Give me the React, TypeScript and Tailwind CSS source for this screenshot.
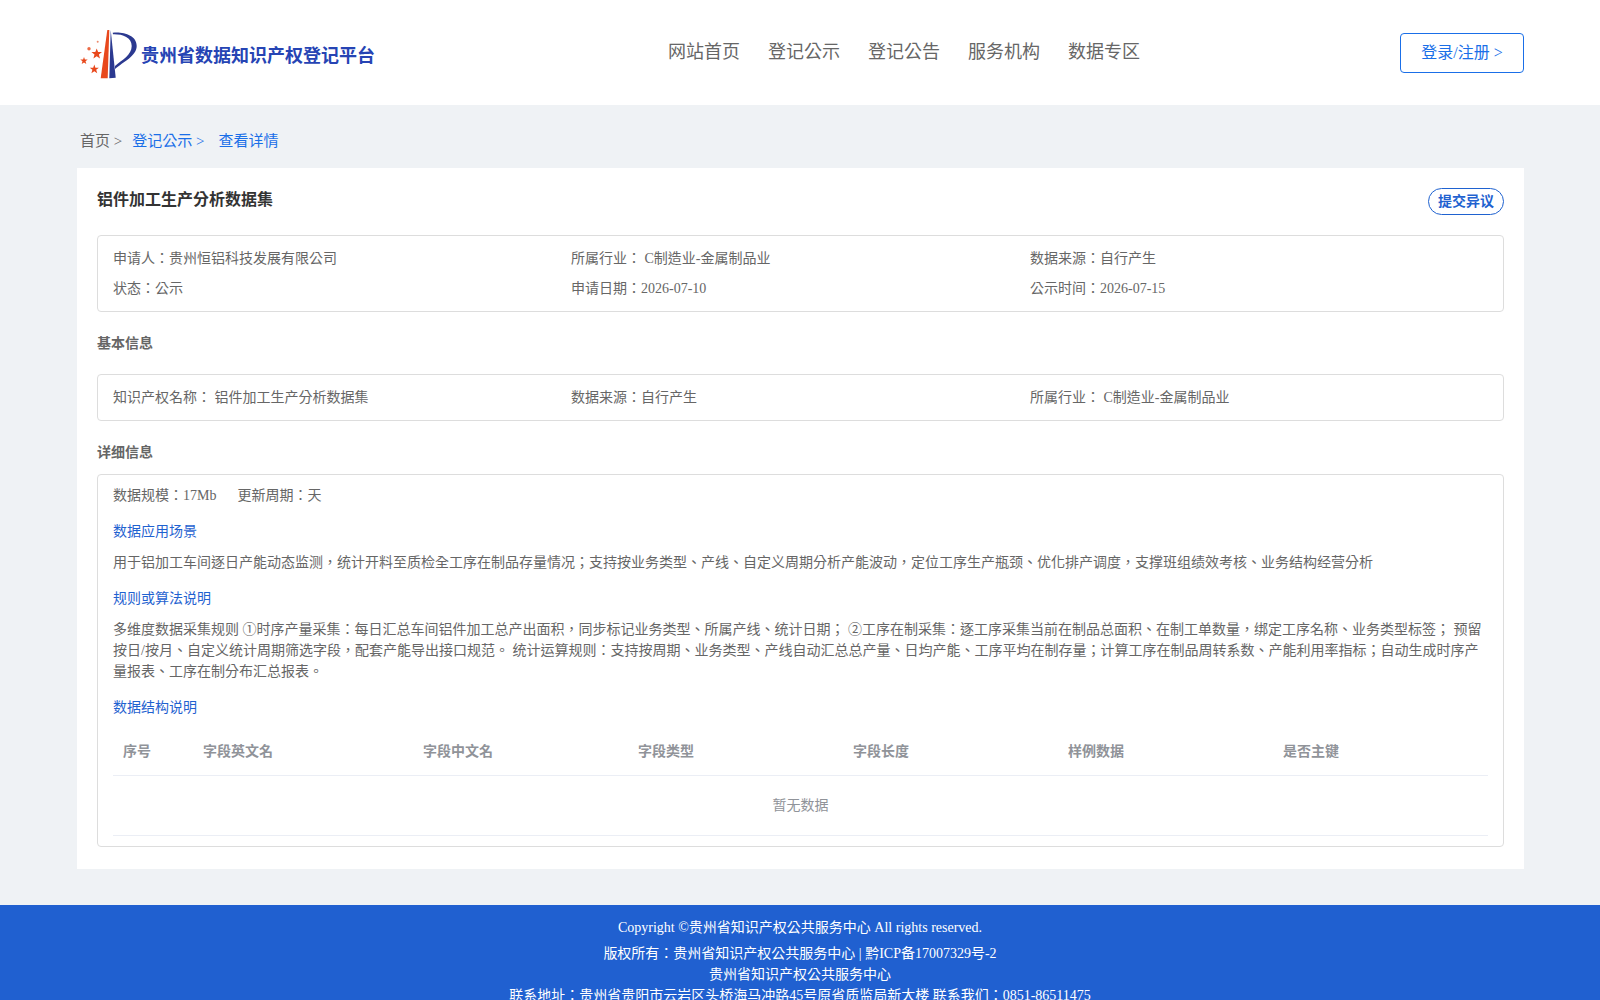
const font = 'font-["Liberation_Serif","Noto_Sans_CJK_TC",serif]';

function Logo() {
  return (
    <svg width="57" height="50" viewBox="0 0 57 50" className="shrink-0">
      <path d="M20.7 49.3 L27.3 1 L29.3 1 L27.7 49.3 Z" fill="#e8481c" />
      <path d="M30.7 1 L29.3 49.3 L35.7 48.7 Z" fill="#2b3990" />
      <path d="M32.7 3.7 C43 2.5 56.7 6 56.7 17 C56.7 27 43 33 35 40 L35 37 C42 31 51.7 26 51.7 17 C51.7 8 42 5 33 5.3 Z" fill="#2b3990" />
      <polygon points="16.7,19.5 18.1,23.1 22,23.1 18.9,25.6 20,29.5 16.7,27.2 13.4,29.5 14.5,25.6 11.4,23.1 15.3,23.1" fill="#e8481c" />
      <polygon points="4,28 4.9,30.6 7.7,30.6 5.5,32.3 6.3,35 4,33.4 1.7,35 2.5,32.3 0.3,30.6 3.1,30.6" fill="#e8481c" />
      <polygon points="14.3,35.5 15.4,38.7 18.9,38.7 16.2,40.8 17.2,44.3 14.3,42.3 11.4,44.3 12.4,40.8 9.7,38.7 13.2,38.7" fill="#e8481c" />
      <circle cx="9" cy="19.7" r="1.7" fill="#ec6a45" />
      <circle cx="17.7" cy="12.7" r="1" fill="#ec8a6c" />
    </svg>
  );
}

function Label({ children }: { children: React.ReactNode }) {
  return <div className="text-sm leading-[21px] text-[#1f62d0]">{children}</div>;
}

const grid3 = "grid grid-cols-[458px_459px_1fr]";

export default function App() {
  return (
    <div className={`${font} h-[1000px] overflow-hidden bg-[#eff2f5]`}>
      <header className="flex h-[105px] items-center bg-white pr-[76px] pl-[80px]">
        <div className="flex w-[588px] items-center gap-[4px] pt-[2px]">
          <Logo />
          <span className="mt-[6px] text-[18px] font-bold text-[#2644b4]">贵州省数据知识产权登记平台</span>
        </div>
        <nav className="flex gap-[28px] text-[18px] text-[#666666]">
          <span>网站首页</span>
          <span>登记公示</span>
          <span>登记公告</span>
          <span>服务机构</span>
          <span>数据专区</span>
        </nav>
        <button className="ml-auto h-[40px] w-[124px] rounded-[4px] border border-[#1a6fe8] text-base text-[#1a6fe8]">登录/注册 &gt;</button>
      </header>

      <div className="flex h-[63px] items-center gap-[10px] pt-[10px] pl-[80px] text-[15px] text-[#666666]">
        <span>首页 &gt;</span>
        <span className="text-[#1a6fe8]">登记公示 &gt;</span>
        <span className="ml-[4px] text-[#1a6fe8]">查看详情</span>
      </div>

      <main className="ml-[77px] h-[701px] w-[1447px] bg-white px-[20px] pt-[20px]">
        <div className="flex items-start justify-between">
          <h1 className="text-base leading-[24px] font-bold text-[#333333]">铝件加工生产分析数据集</h1>
          <button className="h-[27px] w-[76px] rounded-[14px] border border-[#1f62d0] text-sm font-bold text-[#1f62d0]">提交异议</button>
        </div>

        <div className="mt-[20px] rounded-[4px] border border-[#dddddd] px-[15px] pt-[12px] pb-[12px] text-sm text-[#666666]">
          <div className={`${grid3} gap-y-[9px] leading-[21px]`}>
            <div>申请人：贵州恒铝科技发展有限公司</div>
            <div>所属行业： C制造业-金属制品业</div>
            <div>数据来源：自行产生</div>
            <div>状态：公示</div>
            <div>申请日期：2026-07-10</div>
            <div>公示时间：2026-07-15</div>
          </div>
        </div>

        <h2 className="mt-[21px] text-sm leading-[21px] font-bold text-[#666666]">基本信息</h2>

        <div className="mt-[20px] rounded-[4px] border border-[#dddddd] px-[15px] py-[12px] text-sm text-[#666666]">
          <div className={`${grid3} leading-[21px]`}>
            <div>知识产权名称： 铝件加工生产分析数据集</div>
            <div>数据来源：自行产生</div>
            <div>所属行业： C制造业-金属制品业</div>
          </div>
        </div>

        <h2 className="mt-[21px] text-sm leading-[21px] font-bold text-[#666666]">详细信息</h2>

        <div className="mt-[11px] rounded-[4px] border border-[#dddddd] px-[15px] pt-[10px] pb-[10px] text-sm leading-[21px] text-[#666666]">
          <div className="flex gap-[21px]">
            <span>数据规模：17Mb</span>
            <span>更新周期：天</span>
          </div>
          <div className="mt-[15px]"><Label>数据应用场景</Label></div>
          <p className="mt-[10px]">用于铝加工车间逐日产能动态监测，统计开料至质检全工序在制品存量情况；支持按业务类型、产线、自定义周期分析产能波动，定位工序生产瓶颈、优化排产调度，支撑班组绩效考核、业务结构经营分析</p>
          <div className="mt-[15px]"><Label>规则或算法说明</Label></div>
          <p className="mt-[10px]">多维度数据采集规则 ①时序产量采集：每日汇总车间铝件加工总产出面积，同步标记业务类型、所属产线、统计日期； ②工序在制采集：逐工序采集当前在制品总面积、在制工单数量，绑定工序名称、业务类型标签； 预留按日/按月、自定义统计周期筛选字段，配套产能导出接口规范。 统计运算规则：支持按周期、业务类型、产线自动汇总总产量、日均产能、工序平均在制存量；计算工序在制品周转系数、产能利用率指标；自动生成时序产量报表、工序在制分布汇总报表。</p>
          <div className="mt-[15px]"><Label>数据结构说明</Label></div>
          <div className="mt-[9px] grid h-[49px] grid-cols-[80px_220px_215px_215px_215px_215px_1fr] items-center border-b border-[#ebeef5] pl-[10px] font-bold text-[#909399]">
            <span>序号</span>
            <span>字段英文名</span>
            <span>字段中文名</span>
            <span>字段类型</span>
            <span>字段长度</span>
            <span>样例数据</span>
            <span>是否主键</span>
          </div>
          <div className="flex h-[60px] items-center justify-center border-b border-[#ebeef5] text-[#909399]">暂无数据</div>
        </div>
      </main>

      <footer className="mt-[36px] bg-[#2060d0] pt-[12px] text-center text-sm leading-[21px] text-white">
        <div>Copyright ©贵州省知识产权公共服务中心 All rights reserved.</div>
        <div className="mt-[5px]">版权所有：贵州省知识产权公共服务中心 | 黔ICP备17007329号-2</div>
        <div>贵州省知识产权公共服务中心</div>
        <div>联系地址：贵州省贵阳市云岩区头桥海马冲路45号原省质监局新大楼 联系我们：0851-86511475</div>
      </footer>
    </div>
  );
}
